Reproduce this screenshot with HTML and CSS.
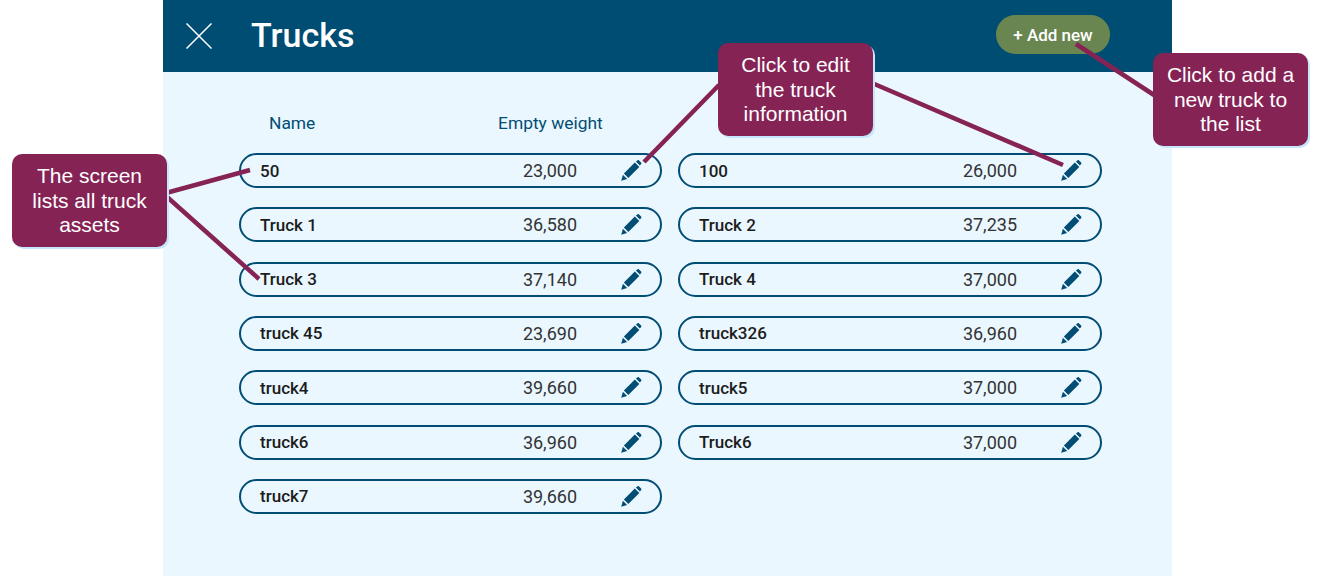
FILE: index.html
```html
<!DOCTYPE html>
<html lang="en">
<head>
    <meta charset="UTF-8">
    <meta name="viewport" content="width=device-width, initial-scale=1.0">
    <title>Trucks</title>
    <link rel="stylesheet" href="styles.css">
</head>
<body>
<svg class="defs" aria-hidden="true">
    <symbol id="pencil" viewBox="0 0 22 22">
        <path d="M15.6 1.6l1.6-1.2c.6-.4 1.2-.4 1.700 0l2.200 2.200c.5.5.5 1.200 0 1.700l-1.300 1.500z"/>
        <path d="M14.500 2.700l4.700 4.700-11.500 11.500-4.700-4.700z"/>
        <path d="M2 15.500l4.400 4.400-6.200 1.900z"/>
    </symbol>
</svg>
<div class="screen">
    <header class="topbar">
        <svg class="close" viewBox="0 0 26 26"><path d="M.5.5l25 25M25.500.5l-25 25"/></svg>
        <h1>Trucks</h1>
        <button class="add-btn">+ Add new</button>
    </header>
    <div class="content">
        <div class="labels">
            <span class="label-name">Name</span>
            <span class="label-weight">Empty weight</span>
        </div>
        <div class="truck-list">
            <div class="truck"><b>50</b><span>23,000</span><svg class="edit"><use href="#pencil"/></svg></div>
            <div class="truck"><b>100</b><span>26,000</span><svg class="edit"><use href="#pencil"/></svg></div>
            <div class="truck"><b>Truck 1</b><span>36,580</span><svg class="edit"><use href="#pencil"/></svg></div>
            <div class="truck"><b>Truck 2</b><span>37,235</span><svg class="edit"><use href="#pencil"/></svg></div>
            <div class="truck"><b>Truck 3</b><span>37,140</span><svg class="edit"><use href="#pencil"/></svg></div>
            <div class="truck"><b>Truck 4</b><span>37,000</span><svg class="edit"><use href="#pencil"/></svg></div>
            <div class="truck"><b>truck 45</b><span>23,690</span><svg class="edit"><use href="#pencil"/></svg></div>
            <div class="truck"><b>truck326</b><span>36,960</span><svg class="edit"><use href="#pencil"/></svg></div>
            <div class="truck"><b>truck4</b><span>39,660</span><svg class="edit"><use href="#pencil"/></svg></div>
            <div class="truck"><b>truck5</b><span>37,000</span><svg class="edit"><use href="#pencil"/></svg></div>
            <div class="truck"><b>truck6</b><span>36,960</span><svg class="edit"><use href="#pencil"/></svg></div>
            <div class="truck"><b>Truck6</b><span>37,000</span><svg class="edit"><use href="#pencil"/></svg></div>
            <div class="truck"><b>truck7</b><span>39,660</span><svg class="edit"><use href="#pencil"/></svg></div>
        </div>
    </div>
</div>

<!-- annotations on top of the screenshot -->
<svg class="leaders" viewBox="0 0 1325 578">
    <path d="M166 193L250 170M166 196L259 279M719 85L644 162M872 83L1063 165M1076 44L1154 95"/>
</svg>
<div class="callout callout-list">The screen lists all truck assets</div>
<div class="callout callout-edit">Click to edit the truck information</div>
<div class="callout callout-add">Click to add a new truck to the list</div>
</body>
</html>
```

FILE: styles.css
```css
html, body {
    height: 100%;
}
body {
    margin: 0;
    background: white;
    font-family: Roboto, sans-serif;
    overflow: hidden;
}
.defs {
    display: none;
}
.screen {
    width: 1009px;
    height: 576px;
    margin-left: 163px;
    display: flex;
    flex-direction: column;
    background: #eaf7ff;
}
.topbar {
    height: 72px;
    display: flex;
    align-items: center;
    padding: 0 62px 0 23px;
    background: #004d73;
    color: white;
}
.close {
    width: 26px;
    height: 26px;
    margin-top: -1px;
    fill: none;
    stroke: white;
    stroke-width: 1.5;
}
.topbar h1 {
    flex: 1;
    margin: -2px 0 0 39px;
    font-size: 34px;
    font-weight: 500;
}
.add-btn {
    width: 114px;
    height: 39px;
    margin-top: -3px;
    padding: 0;
    border: none;
    border-radius: 20px;
    background: #6a8650;
    color: white;
    font-family: inherit;
    font-size: 17px;
    font-weight: 500;
}
.content {
    padding: 0 70px 0 76px;
}
.labels {
    height: 81px;
    display: flex;
    align-items: center;
    padding-top: 21px;
    box-sizing: border-box;
    color: #024d74;
    font-size: 17.4px;
}
.label-name {
    width: 229px;
    margin-left: 30px;
}
.truck-list {
    display: grid;
    grid-template-columns: 423px 424px;
    grid-auto-rows: 35px;
    column-gap: 16px;
    row-gap: 19.33px;
}
.truck {
    display: flex;
    align-items: center;
    padding: 0 18px 0 19px;
    border: 2px solid #024d74;
    border-radius: 18px;
    box-sizing: border-box;
    color: #1c1c1c;
    font-size: 17px;
}
.truck b {
    flex: 1;
    font-weight: 500;
}
.truck span {
    margin-right: 44px;
    color: #333;
    font-size: 18px;
}
.edit {
    width: 21px;
    height: 21px;
    fill: #024d74;
}
.leaders {
    position: absolute;
    left: 0;
    top: 0;
    width: 1325px;
    height: 578px;
    fill: none;
    stroke: #862355;
    stroke-width: 4.5;
}
.callout {
    position: absolute;
    width: 155px;
    height: 93px;
    display: flex;
    align-items: center;
    justify-content: center;
    padding: 1px 10px 0;
    box-sizing: border-box;
    border-radius: 10px;
    background: #862355;
    box-shadow: 2px 2px 0 #c5e6fc;
    color: white;
    font-family: "Liberation Sans", sans-serif;
    font-size: 21px;
    line-height: 24.5px;
    text-align: center;
}
.callout-list {
    left: 12px;
    top: 154px;
}
.callout-edit {
    left: 718px;
    top: 43px;
}
.callout-add {
    left: 1153px;
    top: 53px;
}
```
